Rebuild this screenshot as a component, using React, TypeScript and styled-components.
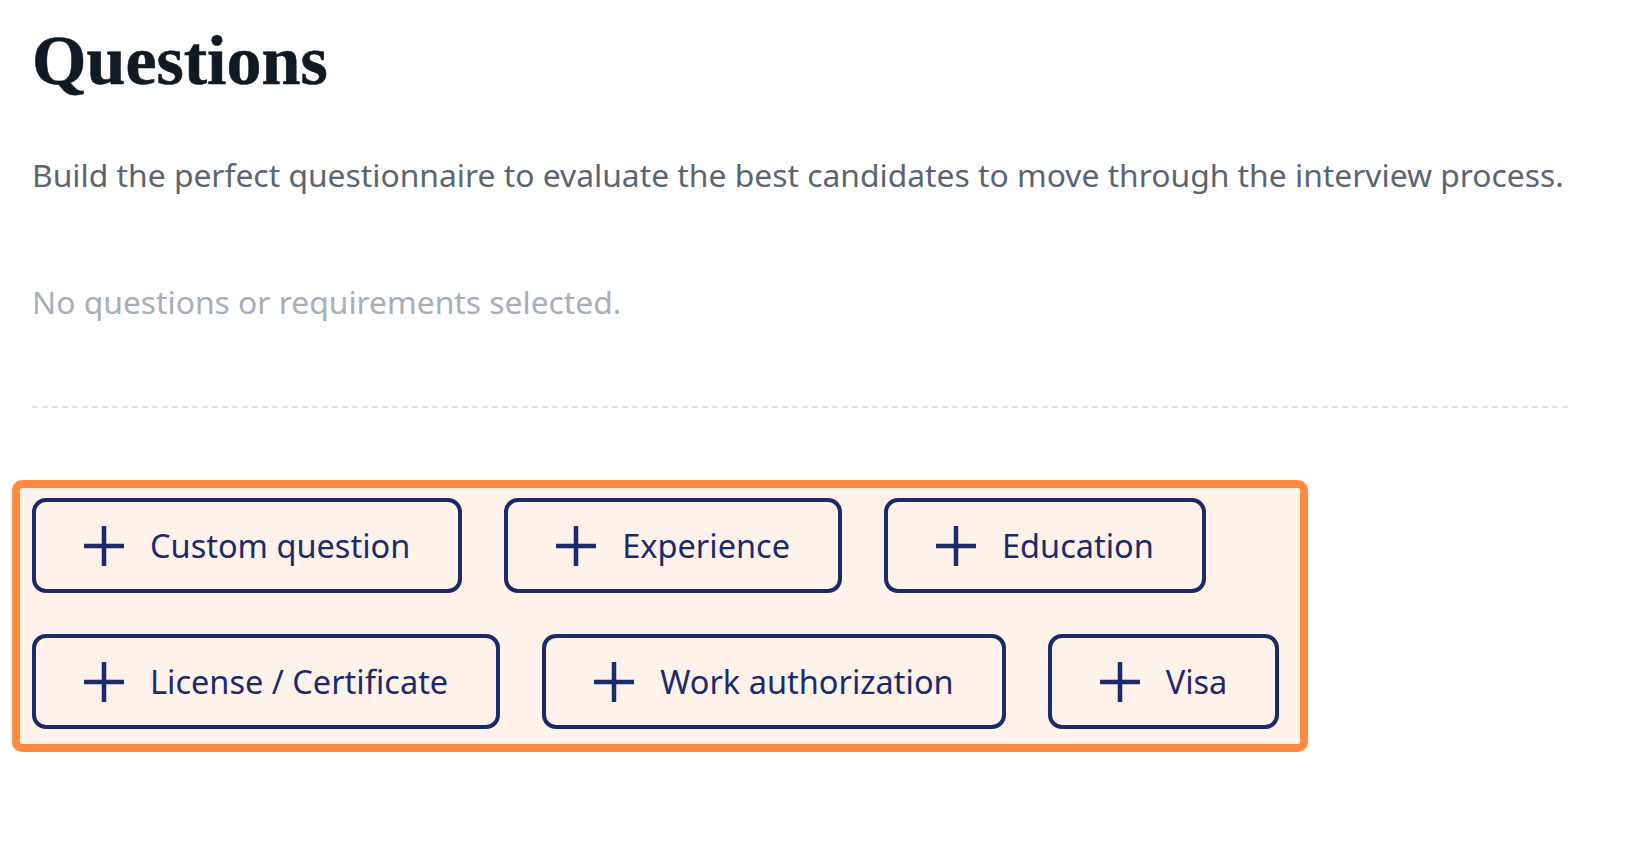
import styled, { createGlobalStyle } from "styled-components";

const GlobalStyle = createGlobalStyle`
  * {
    box-sizing: border-box;
  }
  body {
    margin: 0;
    background: #ffffff;
    font-family: "Noto Sans", "Open Sans", sans-serif;
  }
`;

const requirements = [
  "Custom question",
  "Experience",
  "Education",
  "License / Certificate",
  "Work authorization",
  "Visa",
];

export default function App() {
  return (
    <>
      <GlobalStyle />
      <Page>
        <Title>Questions</Title>
        <Intro>
          Build the perfect questionnaire to evaluate the best candidates to
          move through the interview process.
        </Intro>
        <EmptyNote>No questions or requirements selected.</EmptyNote>
        <Divider />
        <ButtonGroup>
          {requirements.map((label) => (
            <AddButton key={label} type="button">
              <PlusIcon />
              <span>{label}</span>
            </AddButton>
          ))}
        </ButtonGroup>
      </Page>
    </>
  );
}

function PlusIcon() {
  return (
    <IconSvg viewBox="0 0 40 40" aria-hidden="true">
      <line x1="20" y1="0" x2="20" y2="40" />
      <line x1="0" y1="20" x2="40" y2="20" />
    </IconSvg>
  );
}

const Page = styled.main`
  display: flex;
  flex-direction: column;
  align-items: flex-start;
  padding: 19px 76px 40px 32px;
`;

const Title = styled.h1`
  margin: 0;
  font-family: "Liberation Serif", "Times New Roman", serif;
  font-weight: 700;
  font-size: 70px;
  line-height: 84px;
  color: #0f1a24;
  -webkit-text-stroke: 0.6px #0f1a24;
`;

const Intro = styled.p`
  margin: 48px 0 0;
  font-size: 31.8px;
  line-height: 48px;
  color: #5b6570;
  white-space: nowrap;
`;

const EmptyNote = styled.p`
  margin: 79px 0 0;
  font-size: 31.8px;
  line-height: 48px;
  color: #a6aeb8;
`;

const Divider = styled.div`
  align-self: stretch;
  height: 2px;
  margin-top: 80px;
  background-image: repeating-linear-gradient(
    to right,
    #e3e5e8 0 6px,
    transparent 6px 10px
  );
`;

const ButtonGroup = styled.div`
  display: flex;
  flex-wrap: wrap;
  gap: 41px 42px;
  width: 1296px;
  margin: 72px 0 0 -20px;
  padding: 10px 18px 15px 12px;
  border: 8px solid #ff8a3f;
  border-radius: 10px;
  background: #fff2eb;
`;

const AddButton = styled.button`
  display: inline-flex;
  align-items: center;
  gap: 26px;
  height: 95px;
  padding: 0 48px;
  border: 4px solid #1a2b6d;
  border-radius: 14px;
  background: transparent;
  color: #1a2b6d;
  font-family: "Noto Sans", "Open Sans", sans-serif;
  font-size: 32.5px;
  font-weight: 400;
  white-space: nowrap;
  cursor: pointer;
`;

const IconSvg = styled.svg`
  width: 40px;
  height: 40px;
  flex-shrink: 0;
  stroke: #1a2b6d;
  stroke-width: 4.5;
`;
